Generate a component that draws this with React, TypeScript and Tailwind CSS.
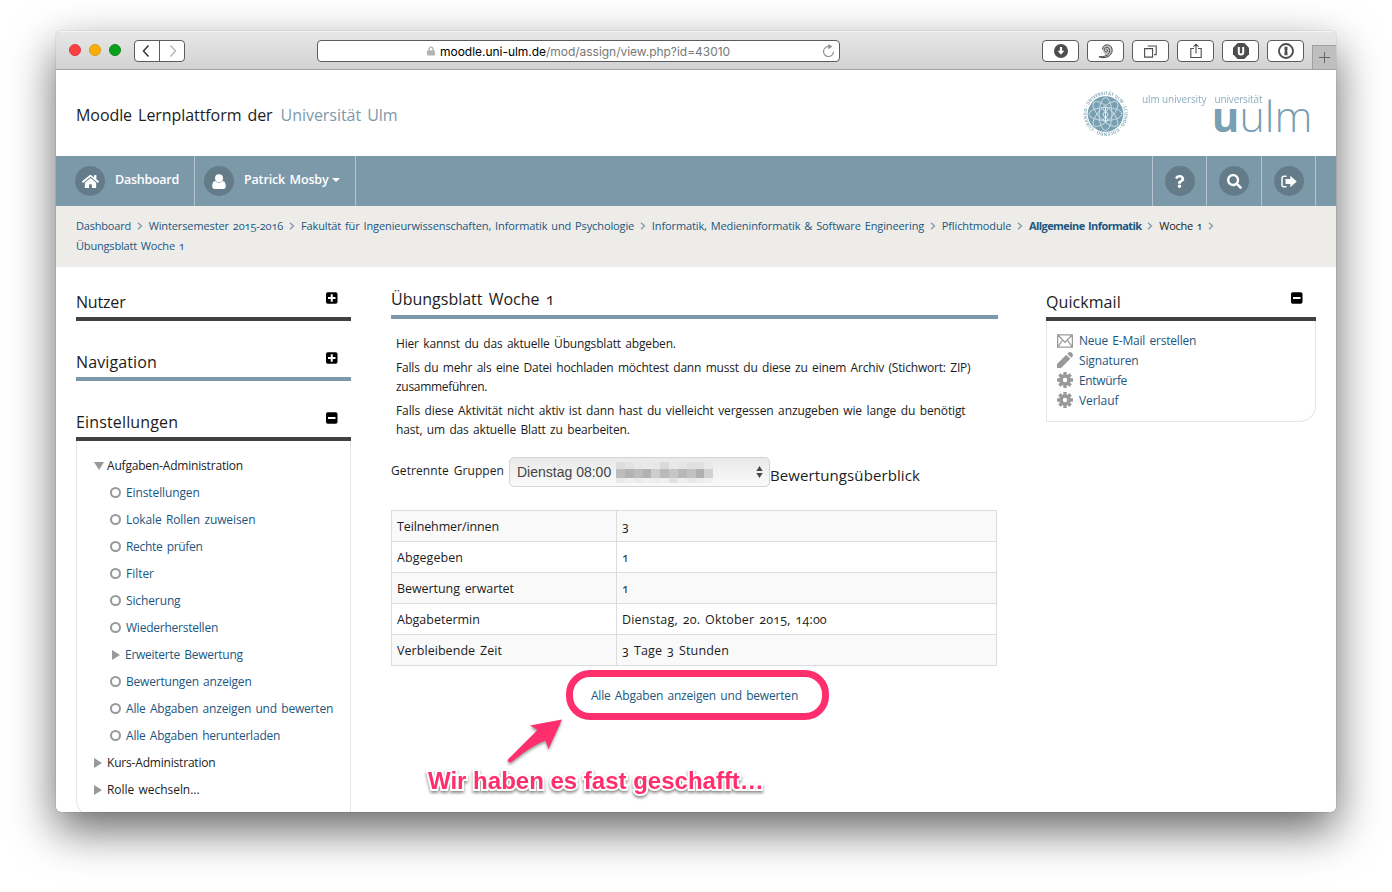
import type { ReactNode } from "react";
import { FaHome, FaLock, FaQuestion, FaSearch } from "react-icons/fa";

const META = "font-['Open_Sans','Noto_Sans',sans-serif] [font-feature-settings:'onum']";

function ToolButton({ children }: { children: ReactNode }) {
  return (
    <div className="flex h-[22px] w-[37px] items-center justify-center rounded-[4px] border border-[#5c5c5c] bg-white text-[#4d4d4d]">
      {children}
    </div>
  );
}

function BrowserBar() {
  return (
    <div className="flex h-[39px] shrink-0 border-b border-[#a3a3a3] bg-linear-to-b from-[#e8e8e8] to-[#d2d2d2] shadow-[inset_0_1px_0_#f4f4f4]">
      <div className="flex h-[38px] w-[261px] items-center pl-[13px]">
        <div className="flex gap-2">
          <span className="size-3 rounded-full border border-[#e2383c] bg-[#fc4043]" />
          <span className="size-3 rounded-full border border-[#dd9a10] bg-[#f9ae06]" />
          <span className="size-3 rounded-full border border-[#0d8a1b] bg-[#08a01c]" />
        </div>
        <div className="ml-[13px] mt-[2px] flex h-[22px] w-[51px] rounded-[4px] border border-[#5c5c5c] bg-white">
          <span className="flex flex-1 items-center justify-center border-r border-[#5c5c5c] pr-[2px]">
            <svg width="8" height="12" viewBox="0 0 8 12" fill="none" stroke="#333" strokeWidth="1.5"><path d="M6.5 .5 1.5 6l5 5.500" /></svg>
          </span>
          <span className="flex flex-1 items-center justify-center pl-[2px]">
            <svg width="8" height="12" viewBox="0 0 8 12" fill="none" stroke="#b9b9b9" strokeWidth="1.5"><path d="m1.5 .5 5 5.500-5 5.500" /></svg>
          </span>
        </div>
      </div>
      <div className="mt-[9px] flex h-[22px] w-[523px] items-center rounded-[4px] border border-[#5c5c5c] bg-white pr-1 font-['Inter',sans-serif] text-[12px] tracking-[-0.03px]">
        <FaLock className="ml-[109px] h-[10px] w-[8px] text-[#b2b2b2]" />
        <span className="ml-[5px] mt-px grow whitespace-nowrap leading-5 text-[#777]"><span className="text-black">moodle.uni-ulm.de</span>/mod/assign/view.php?id=43010</span>
        <svg width="13" height="14" viewBox="0 0 13 14" fill="none" stroke="#8c8c8c" strokeWidth="1.1">
          <path d="M7.2 2.6A5 5 0 1 0 11.5 7.6" /><path d="M6.3 0v5.2l4-2.6z" fill="#8c8c8c" stroke="none" />
        </svg>
      </div>
      <div className="ml-[202px] mt-[9px] flex gap-2">
        <ToolButton>
          <svg width="14" height="14" viewBox="0 0 14 14"><circle cx="7" cy="7" r="7" fill="#4d4d4d" /><path d="M5.9 3h2.2v3.8h2.3L7 10.8 3.6 6.8h2.3z" fill="#fff" /></svg>
        </ToolButton>
        <ToolButton>
          <svg width="15" height="15" viewBox="0 0 15 15" fill="none" stroke="#4d4d4d">
            <path d="M4.300 5.500C4.300 2.500 6.500.8 9.300.8c3.200 0 5 2.500 5 5.300 0 5-4 8.200-9 8.200-2 0-3.500-.5-4.800-1.600 2.500.6 5 .2 6.800-1.200z" fill="#c4c4c4" stroke="none" />
            <path d="M.8 12.500c5 2.800 13.400.3 13.400-6.300C14.200 3 12.200.8 9.300.8 6.500.8 4.500 2.700 4.500 5.300" />
            <path d="M1 12.600c4.500.3 10.600-.6 10.600-6 0-2-1.200-3.300-2.800-3.300S6.300 4.500 6.300 5.800s.9 2.100 1.900 2.100 1.500-.8 1.300-1.700-1-.9-1.300-.4" />
          </svg>
        </ToolButton>
        <ToolButton>
          <svg width="13" height="13" viewBox="0 0 13 13" fill="none" stroke="#4d4d4d" strokeWidth="1.1"><path d="M.6 3.600h8v8.500h-8zM3.600 1h8.600v8.600h-2" /></svg>
        </ToolButton>
        <ToolButton>
          <svg width="12" height="16" viewBox="0 0 12 16" fill="none" stroke="#4d4d4d" strokeWidth="1.1"><path d="M4 5.500H.8v9h10.400v-9H8M6 10.500V1.200M3.500 3.700 6 1.200l2.500 2.500" /></svg>
        </ToolButton>
        <ToolButton>
          <svg width="16" height="16" viewBox="0 0 16 16"><path d="M4.700 0h6.600L16 4.700v6.600L11.300 16H4.700L0 11.300V4.700z" fill="#4d4d4d" /><path d="M5.800 4v5.200a2.200 2.200 0 0 0 4.400 0V4" fill="none" stroke="#fff" strokeWidth="2" /></svg>
        </ToolButton>
        <ToolButton>
          <svg width="16" height="16" viewBox="0 0 16 16"><circle cx="8" cy="8" r="7" fill="none" stroke="#4d4d4d" strokeWidth="1.900" /><path d="M6.500 3.800h3v3.400l-.7.8.7.800v3.400h-3V8.800l.7-.8-.7-.8z" fill="#4d4d4d" /></svg>
        </ToolButton>
      </div>
      <div className="ml-[8px] mt-[14px] flex grow items-center justify-center border-l border-t border-[#a0a0a0] bg-[#bfbfbf]">
        <svg width="11" height="11" viewBox="0 0 11 11" stroke="#666"><path d="M5.500 0v11M0 5.500h11" /></svg>
      </div>
    </div>
  );
}

function Logo() {
  const petals = [0, 45, 90, 135];
  return (
    <svg width="232" height="54" viewBox="1080 86 232 54" fill="#789fb2" className="overflow-visible font-['Open_Sans',sans-serif]">
      <circle cx="1105.500" cy="114" r="17.800" />
      <g fill="none" stroke="#dbe7ed" strokeWidth=".8">
        {petals.map((a) => <ellipse key={a} cx="1105.500" cy="114" rx="16.500" ry="6.500" transform={`rotate(${a} 1105.500 114)`} />)}
      </g>
      <path d="M1105.500 107v15M1103 108.500c0 3 5 3 5 6s-5 3-5 5.500M1108 108.500c0 3-5 3-5 6s5 3 5 5.500" fill="none" stroke="#e6eff3" strokeWidth="1" />
      <path id="seal-ring" d="M1088.700 105.300a18.900 18.900 0 1 1-.02.04" fill="none" />
      <text fontSize="4.400" fontWeight="700" opacity=".85"><textPath href="#seal-ring" textLength="117">UNIVERSITÄT ULM · SCIENDO · DOCENDO · CURANDO ·</textPath></text>
      <text x="1142" y="103" fontSize="10" fontWeight="400" opacity=".85" textLength="64.500">ulm university</text>
      <text x="1214.500" y="103" fontSize="10" fontWeight="400" opacity=".85" textLength="48">universität</text>
      <text x="1211.800" y="131.500" fontSize="42" fontWeight="700">u</text>
      <text x="1239.500" y="131.500" fontSize="43" fontWeight="300" textLength="73">ulm</text>
    </svg>
  );
}

function Disc({ children }: { children: ReactNode }) {
  return <span className="flex size-[30px] items-center justify-center rounded-full bg-[#647c89] text-white">{children}</span>;
}

function NavBar() {
  return (
    <div className="flex h-[50px] shrink-0 bg-[#7c99aa] text-[12.5px] font-semibold text-white">
      <div className="flex w-[139px] items-center border-r border-[#b3c4ce] pl-[19px]">
        <Disc><FaHome size={17} /></Disc>
        <span className="mb-[2px] ml-[10px] tracking-[-0.25px]">Dashboard</span>
      </div>
      <div className="flex w-[161px] items-center border-r border-[#b3c4ce] pl-[9px]">
        <Disc>
          <svg width="14" height="15" viewBox="0 0 14 15" fill="currentColor"><circle cx="7" cy="4.200" r="4" /><path d="M3.200 6.900C1 7.300.2 9.500.2 12.300.2 14 1.200 15 2.800 15h8.400c1.600 0 2.600-1 2.600-2.700 0-2.800-.8-5-3-5.400a5 5 0 0 1-7.600 0z" /></svg>
        </Disc>
        <span className="mb-[2px] ml-[10px] whitespace-nowrap tracking-[-0.16px] [word-spacing:1.5px]">Patrick Mosby</span>
        <svg className="mb-[3px] ml-[3px]" width="8" height="4" viewBox="0 0 8 4" fill="currentColor"><path d="M0 0h8L4 4z" /></svg>
      </div>
      <div className="grow" />
      <div className="flex w-[55px] items-center justify-center border-x border-[#b3c4ce]"><Disc><FaQuestion size={13} /></Disc></div>
      <div className="flex w-[55px] items-center justify-center border-r border-[#b3c4ce]"><Disc><FaSearch size={15} /></Disc></div>
      <div className="flex w-[54px] items-center justify-center border-r border-[#b3c4ce]">
        <Disc>
          <svg width="16" height="13" viewBox="0 0 16 13"><path d="M5.500 1.200H3A2 2 0 0 0 1 3.200v6.600a2 2 0 0 0 2 2h2.500" fill="none" stroke="currentColor" strokeWidth="1.500" /><path d="M9.300.8 15.700 6.500 9.300 12.200V9H4.500V4h4.800z" fill="currentColor" /></svg>
        </Disc>
      </div>
      <div className="w-5" />
    </div>
  );
}

const crumbs: [string, string][] = [
  ["Dashboard", "tracking-[-0.2px]"],
  ["Wintersemester 2015-2016", "tracking-[-0.12px]"],
  ["Fakultät für Ingenieurwissenschaften, Informatik und Psychologie", "tracking-[-0.115px]"],
  ["Informatik, Medieninformatik & Software Engineering", "tracking-[-0.12px]"],
  ["Pflichtmodule", "tracking-[-0.12px]"],
  ["Allgemeine Informatik", "tracking-[-0.58px] font-bold"],
  ["Woche 1", "tracking-[-0.29px] text-[#222]"],
  ["Übungsblatt Woche 1", "tracking-[-0.18px]"],
];

function Breadcrumbs() {
  return (
    <div className="flex h-[61px] shrink-0 flex-wrap content-start bg-[#edece8] px-5 pt-[10px] text-[11px] leading-5 text-[#1c5680] [word-spacing:1.2px]">
      {crumbs.map(([label, look], i) => (
        <span key={label} className="flex items-center whitespace-nowrap">
          <span className={look}>{label}</span>
          {i < crumbs.length - 1 && (
            <span className="flex w-[17.700px] justify-center">
              <svg width="6" height="8" viewBox="0 0 6 8" fill="none" stroke="#8199a8" strokeWidth="1.300"><path d="m1 .7 3.500 3.300L1 7.300" /></svg>
            </span>
          )}
        </span>
      ))}
    </div>
  );
}

function Toggle({ open }: { open: boolean }) {
  return (
    <svg width="12" height="12" viewBox="0 0 12 12"><rect x="0" y=".3" width="11.500" height="11.500" rx="1.800" /><path d={open ? "M2 6h7.500" : "M2 6h7.500M5.750 2.250v7.500"} stroke="#fff" strokeWidth="2" /></svg>
  );
}

function BlockTitle({ title, look, bar, open }: { title: string; look: string; bar: string; open: boolean }) {
  return (
    <div className={`flex h-[31px] items-start justify-between border-b-4 pr-[13px] ${bar}`}>
      <h2 className={`text-[16px] leading-6 ${look}`}>{title}</h2>
      <span className="mt-[2px]"><Toggle open={open} /></span>
    </div>
  );
}

type Kind = "open" | "closed" | "leaf" | "sub";
const tree: [string, Kind, string][] = [
  ["Aufgaben-Administration", "open", "tracking-[-0.19px]"],
  ["Einstellungen", "leaf", "tracking-[-0.11px]"],
  ["Lokale Rollen zuweisen", "leaf", "tracking-[-0.11px]"],
  ["Rechte prüfen", "leaf", "tracking-[-0.3px]"],
  ["Filter", "leaf", "tracking-[-0.03px]"],
  ["Sicherung", "leaf", "tracking-[-0.12px]"],
  ["Wiederherstellen", "leaf", "tracking-[-0.23px]"],
  ["Erweiterte Bewertung", "sub", "tracking-[-0.26px]"],
  ["Bewertungen anzeigen", "leaf", "tracking-[-0.2px]"],
  ["Alle Abgaben anzeigen und bewerten", "leaf", "tracking-[-0.18px]"],
  ["Alle Abgaben herunterladen", "leaf", "tracking-[-0.21px]"],
  ["Kurs-Administration", "closed", "tracking-[-0.19px]"],
  ["Rolle wechseln...", "closed", "tracking-[-0.05px]"],
];

function Marker({ kind }: { kind: Kind }) {
  if (kind === "leaf") return <span className="ml-4 mr-[5px] size-[11px] rounded-full border-2 border-[#999]" />;
  if (kind === "open") return <svg className="mr-[3px]" width="10" height="8" viewBox="0 0 10 8" fill="#999"><path d="M0 0h10L5 8z" /></svg>;
  return (
    <svg className={kind === "sub" ? "ml-[18px] mr-[5px]" : "mr-[5px]"} width="8" height="10" viewBox="0 0 8 10" fill="#999"><path d="M0 0v10l8-5z" /></svg>
  );
}

function LeftColumn() {
  return (
    <div className="flex w-[275px] flex-col gap-[29px] pt-[23px]">
      <BlockTitle title="Nutzer" look="tracking-[-0.18px]" bar="border-[#3d4143]" open={false} />
      <BlockTitle title="Navigation" look="tracking-[0.11px]" bar="border-[#7c99aa]" open={false} />
      <div>
        <BlockTitle title="Einstellungen" look="tracking-[0.15px]" bar="border-[#3d4143]" open />
        <ul className="h-[378px] rounded-bl-[20px] border border-t-0 border-[#e6e6e4] pl-[17px] pt-[11px] text-[12px] leading-[27px] [word-spacing:1.350px]">
          {tree.map(([label, kind, look]) => (
            <li key={label} className={kind === "leaf" || kind === "sub" ? "flex h-[27px] items-center text-[#1c5680]" : "flex h-[27px] items-center"}>
              <Marker kind={kind} />
              <span className={look}>{label}</span>
            </li>
          ))}
        </ul>
      </div>
    </div>
  );
}

const rows: [string, string, string, string][] = [
  ["Teilnehmer/innen", "tracking-[-0.13px]", "3", ""],
  ["Abgegeben", "tracking-[0.05px]", "1", ""],
  ["Bewertung erwartet", "tracking-[-0.06px]", "1", ""],
  ["Abgabetermin", "", "Dienstag, 20. Oktober 2015, 14:00", "tracking-[0.17px]"],
  ["Verbleibende Zeit", "tracking-[0.05px]", "3 Tage 3 Stunden", "tracking-[0.16px]"],
];

const mosaic = [
  "bg-[#dedede]", "bg-[#e3e3e3]", "bg-[#e8e8e8]", "bg-[#eaeaea]", "bg-[#e8e8e8]", "bg-[#d9dbdb]", "bg-[#e8e8e8]", "bg-[#e6e6e6]", "bg-[#dfe0e0]", "bg-[#e0e0e0]", "bg-[#e9e9e9]",
  "bg-[#bdbdbd]", "bg-[#b3b3b3]", "bg-[#bcbcbc]", "bg-[#b1b1b1]", "bg-[#cdcdcd]", "bg-[#bababa]", "bg-[#c6c6c6]", "bg-[#b8b8b8]", "bg-[#c2c2c2]", "bg-[#b0b0b0]", "bg-[#d0d1d2]",
  "bg-[#e9e9e9]", "bg-[#efefef]", "bg-[#eaeaea]", "bg-[#f0f0f0]", "bg-[#ededed]", "bg-[#f0f0f0]", "bg-[#e2e2e2]", "bg-[#efefef]", "bg-[#e8e8e8]", "bg-[#ededed]", "bg-[#f0f0f0]",
];

function MainColumn() {
  return (
    <main className="w-[607px]">
      <h1 className="h-[52px] border-b-4 border-[#7c99aa] pt-5 text-[16px] leading-6 [word-spacing:2px]">Übungsblatt Woche 1</h1>
      <div className="flex flex-col gap-[5px] whitespace-nowrap pl-[5px] pt-[15px] text-[12px] leading-[19px] [word-spacing:1.500px]">
        <p className="tracking-[-0.17px]">Hier kannst du das aktuelle Übungsblatt abgeben.</p>
        <p className="tracking-[-0.19px]">Falls du mehr als eine Datei hochladen möchtest dann musst du diese zu einem Archiv (Stichwort: ZIP)<br /><span className="tracking-[-0.3px]">zusammeführen.</span></p>
        <p className="tracking-[-0.115px]">Falls diese Aktivität nicht aktiv ist dann hast du vielleicht vergessen anzugeben wie lange du benötigt<br /><span className="tracking-[-0.16px]">hast, um das aktuelle Blatt zu bearbeiten.</span></p>
      </div>
      <div className="mt-[18px] flex h-[30px] items-start whitespace-nowrap">
        <span className="w-[118px] pt-[4px] text-[12px] leading-[19px] tracking-[0.090px] [word-spacing:1.500px]">Getrennte Gruppen</span>
        <div className="flex h-[30px] w-[261px] items-center rounded-[5px] border border-[#d4d4d4] bg-linear-to-b from-[#e9e9e9] to-[#fafafa] pl-[7px] pr-[6px] font-['Liberation_Sans',sans-serif] text-[14px] text-[#444]">
          <span>Dienstag 08:00</span>
          <div className="ml-[5px] grid h-[21px] w-[97px] grid-cols-11 grid-rows-[7px_9px_5px]">
            {mosaic.map((tone, i) => <span key={i} className={tone} />)}
          </div>
          <svg className="ml-auto" width="7" height="12" viewBox="0 0 7 12" fill="#4a4a4a"><path d="M3.500 0 6.700 5H.3zM3.500 12 6.700 7H.3z" /></svg>
        </div>
        <h2 className="pt-[7px] text-[15px] leading-[22px] tracking-[0.100px]">Bewertungsüberblick</h2>
      </div>
      <div className="mt-[23px] w-[606px] border-x border-t border-[#dcdcdc] text-[12.500px] [word-spacing:1.500px]">
        {rows.map(([name, nameLook, value, valueLook], i) => (
          <div key={name} className={`flex h-[31px] border-b border-[#dcdcdc] leading-[32px] ${i % 2 ? "bg-white" : "bg-[#f9f9f9]"}`}>
            <span className={`w-[225px] border-r border-[#dcdcdc] pl-[5px] ${nameLook}`}>{name}</span>
            <span className={`pl-[5px] ${valueLook}`}>{value}</span>
          </div>
        ))}
      </div>
      <div className="ml-[175px] mt-[4px] flex h-[50px] w-[263px] items-center justify-center rounded-[24px] border-[7px] border-[#ff2f6e] pr-[6px] pt-[2px] text-[12px] tracking-[-0.18px] text-[#1c5680] [word-spacing:1.350px]">
        Alle Abgaben anzeigen und bewerten
      </div>
      <svg className="ml-[112px] block overflow-visible [filter:drop-shadow(0_2px_1.500px_rgba(0,0,0,.4))]" width="62" height="44" viewBox="503 720 62 44" fill="#ff2f6e">
        <path d="M562 719.500 548.500 749 545.500 740.500C533 745 522 754 511.500 762c-2 1.200-5-.8-3.300-2.700L537.500 730 530 725.500z" />
      </svg>
      <p className="ml-[37px] mt-[3px] whitespace-nowrap font-['Liberation_Sans',sans-serif] text-[24px] font-bold leading-[28px] text-[#ff2f6e] [-webkit-text-stroke:4px_white] [filter:drop-shadow(0_2px_1.500px_rgba(0,0,0,.45))] [paint-order:stroke_fill]">
        Wir haben es fast geschafft…
      </p>
    </main>
  );
}

function Envelope() {
  return <svg width="16" height="14" viewBox="0 0 16 14" fill="none" stroke="#999" strokeWidth="1.300"><path d="M.6.800h14.800v12.400H.6zM.8 1 8 8.400 15.200 1M.8 13l4.700-6.800M15.200 13l-4.700-6.800" /></svg>;
}

function Pencil() {
  return <svg className="-mt-[2px]" width="16" height="16" viewBox="0 0 16 16" fill="#999"><path d="M0 16v-4L9.300 2.700l4 4L4 16zM10.300 1.700 11.500.6c.8-.8 2.200-.8 3 0l.9.9c.8.8.8 2.200 0 3l-1.100 1.200z" /></svg>;
}

function Gear() {
  const teeth = [0, 45, 90, 135];
  return (
    <svg className="-mt-[2px]" width="16" height="16" viewBox="0 0 16 16">
      <g fill="#999">
        <circle cx="8" cy="8" r="5.800" />
        {teeth.map((a) => <rect key={a} x="6.300" y="0" width="3.400" height="16" rx=".5" transform={`rotate(${a} 8 8)`} />)}
      </g>
      <circle cx="8" cy="8" r="2.200" fill="#fff" />
    </svg>
  );
}

function RightColumn() {
  const links: [string, string, ReactNode][] = [
    ["Neue E-Mail erstellen", "tracking-[-0.2px]", <Envelope />],
    ["Signaturen", "tracking-[-0.13px]", <Pencil />],
    ["Entwürfe", "tracking-[-0.330px]", <Gear />],
    ["Verlauf", "tracking-[-0.060px]", <Gear />],
  ];
  return (
    <div className="w-[270px] pt-[23px]">
      <BlockTitle title="Quickmail" look="tracking-[0.070px]" bar="border-[#3d4143]" open />
      <ul className="h-[101px] rounded-br-[16px] border border-t-0 border-[#e6e6e4] pl-[10px] pt-[10px] text-[12px] leading-5 [word-spacing:1.350px]">
        {links.map(([label, look, icon]) => (
          <li key={label} className="flex h-5 items-center text-[#1c5680]">
            <span className="mr-[6px] flex w-4 justify-center">{icon}</span>
            <span className={look}>{label}</span>
          </li>
        ))}
      </ul>
    </div>
  );
}

export default function App() {
  return (
    <div className={`flex h-[892px] w-[1392px] items-start overflow-hidden bg-white pl-14 pt-[31px] text-[#1c1c1c] ${META}`}>
      <div className="flex h-[781px] w-[1280px] flex-col overflow-hidden rounded-[5px] bg-white shadow-[0_0_1px_rgba(0,0,0,.5),0_18px_45px_rgba(0,0,0,.6)]">
        <BrowserBar />
        <header className="flex h-[86px] shrink-0 items-start justify-between pl-5 pr-6 pt-4">
          <p className="flex gap-[8px] pt-[17px] text-[16px] leading-6 [word-spacing:2px]">
            <span className="tracking-[-0.070px]">Moodle Lernplattform der</span>
            <span className="tracking-[-0.040px] text-[#7c99aa]">Universität Ulm</span>
          </p>
          <Logo />
        </header>
        <NavBar />
        <Breadcrumbs />
        <div className="flex min-h-0 grow items-start pl-5">
          <LeftColumn />
          <div className="w-10 shrink-0" />
          <MainColumn />
          <div className="w-12 shrink-0" />
          <RightColumn />
        </div>
      </div>
    </div>
  );
}
